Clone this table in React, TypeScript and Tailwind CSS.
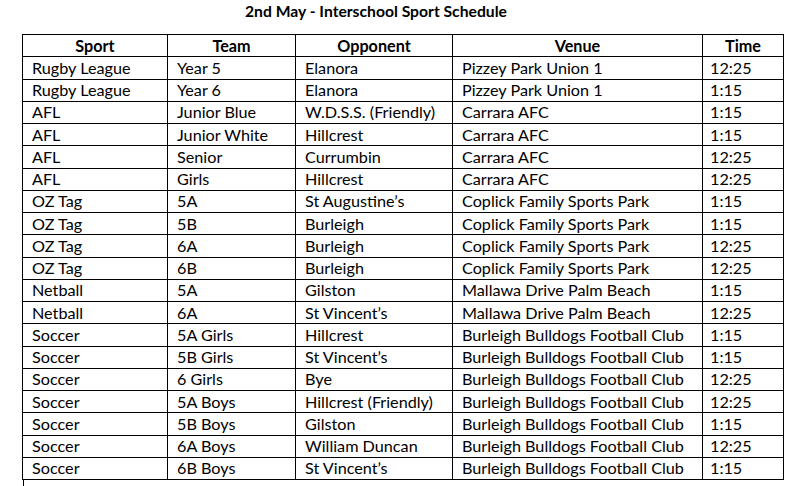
import React from "react"

// 2nd May interschool sport schedule, shown as a plain bordered table
interface Fixture {
  sport: string
  team: string
  opponent: string
  venue: string
  time: string
}

const FIXTURES: Fixture[] = [
  { sport: "Rugby League", team: "Year 5", opponent: "Elanora", venue: "Pizzey Park Union 1", time: "12:25" },
  { sport: "Rugby League", team: "Year 6", opponent: "Elanora", venue: "Pizzey Park Union 1", time: "1:15" },
  { sport: "AFL", team: "Junior Blue", opponent: "W.D.S.S. (Friendly)", venue: "Carrara AFC", time: "1:15" },
  { sport: "AFL", team: "Junior White", opponent: "Hillcrest", venue: "Carrara AFC", time: "1:15" },
  { sport: "AFL", team: "Senior", opponent: "Currumbin", venue: "Carrara AFC", time: "12:25" },
  { sport: "AFL", team: "Girls", opponent: "Hillcrest", venue: "Carrara AFC", time: "12:25" },
  { sport: "OZ Tag", team: "5A", opponent: "St Augustine’s", venue: "Coplick Family Sports Park", time: "1:15" },
  { sport: "OZ Tag", team: "5B", opponent: "Burleigh", venue: "Coplick Family Sports Park", time: "1:15" },
  { sport: "OZ Tag", team: "6A", opponent: "Burleigh", venue: "Coplick Family Sports Park", time: "12:25" },
  { sport: "OZ Tag", team: "6B", opponent: "Burleigh", venue: "Coplick Family Sports Park", time: "12:25" },
  { sport: "Netball", team: "5A", opponent: "Gilston", venue: "Mallawa Drive Palm Beach", time: "1:15" },
  { sport: "Netball", team: "6A", opponent: "St Vincent’s", venue: "Mallawa Drive Palm Beach", time: "12:25" },
  { sport: "Soccer", team: "5A Girls", opponent: "Hillcrest", venue: "Burleigh Bulldogs Football Club", time: "1:15" },
  { sport: "Soccer", team: "5B Girls", opponent: "St Vincent’s", venue: "Burleigh Bulldogs Football Club", time: "1:15" },
  { sport: "Soccer", team: "6 Girls", opponent: "Bye", venue: "Burleigh Bulldogs Football Club", time: "12:25" },
  { sport: "Soccer", team: "5A Boys", opponent: "Hillcrest (Friendly)", venue: "Burleigh Bulldogs Football Club", time: "12:25" },
  { sport: "Soccer", team: "5B Boys", opponent: "Gilston", venue: "Burleigh Bulldogs Football Club", time: "1:15" },
  { sport: "Soccer", team: "6A Boys", opponent: "William Duncan", venue: "Burleigh Bulldogs Football Club", time: "12:25" },
  { sport: "Soccer", team: "6B Boys", opponent: "St Vincent’s", venue: "Burleigh Bulldogs Football Club", time: "1:15" },
]

const HEADERS = ["Sport", "Team", "Opponent", "Venue", "Time"]

export default function App() {
  return (
    <div className="w-[810px] h-[486px] overflow-hidden bg-white text-black font-['Lato','Liberation_Sans',sans-serif] text-[16.2px]">
      <h1 className="pl-[245px] pt-[1px] h-[34px] font-bold text-[15.7px] leading-[20px]">
        2nd May - Interschool Sport Schedule
      </h1>

      <table className="ml-[22px] w-[761px] table-fixed border-collapse border border-black">
        <colgroup>
          <col className="w-[145px]" />
          <col className="w-[128px]" />
          <col className="w-[157px]" />
          <col className="w-[250px]" />
          <col className="w-[81px]" />
        </colgroup>
        <thead>
          <tr className="h-[22.25px]">
            {HEADERS.map((h) => (
              <th key={h} className="border border-black p-0 text-center font-bold leading-none">
                {h}
              </th>
            ))}
          </tr>
        </thead>
        <tbody>
          {FIXTURES.map((f, idx) => (
            <tr key={idx} className="h-[22.25px]">
              <td className="border border-black px-[9px] py-0 leading-none whitespace-nowrap">{f.sport}</td>
              <td className="border border-black px-[9px] py-0 leading-none whitespace-nowrap">{f.team}</td>
              <td className="border border-black px-[9px] py-0 leading-none whitespace-nowrap">{f.opponent}</td>
              <td className="border border-black px-[9px] py-0 leading-none whitespace-nowrap">{f.venue}</td>
              <td className="border border-black px-[7px] py-0 leading-none whitespace-nowrap">{f.time}</td>
            </tr>
          ))}
        </tbody>
      </table>

      {/* left margin marker under the table */}
      <div className="ml-[23px] w-px h-[10px] bg-black" />
    </div>
  )
}
